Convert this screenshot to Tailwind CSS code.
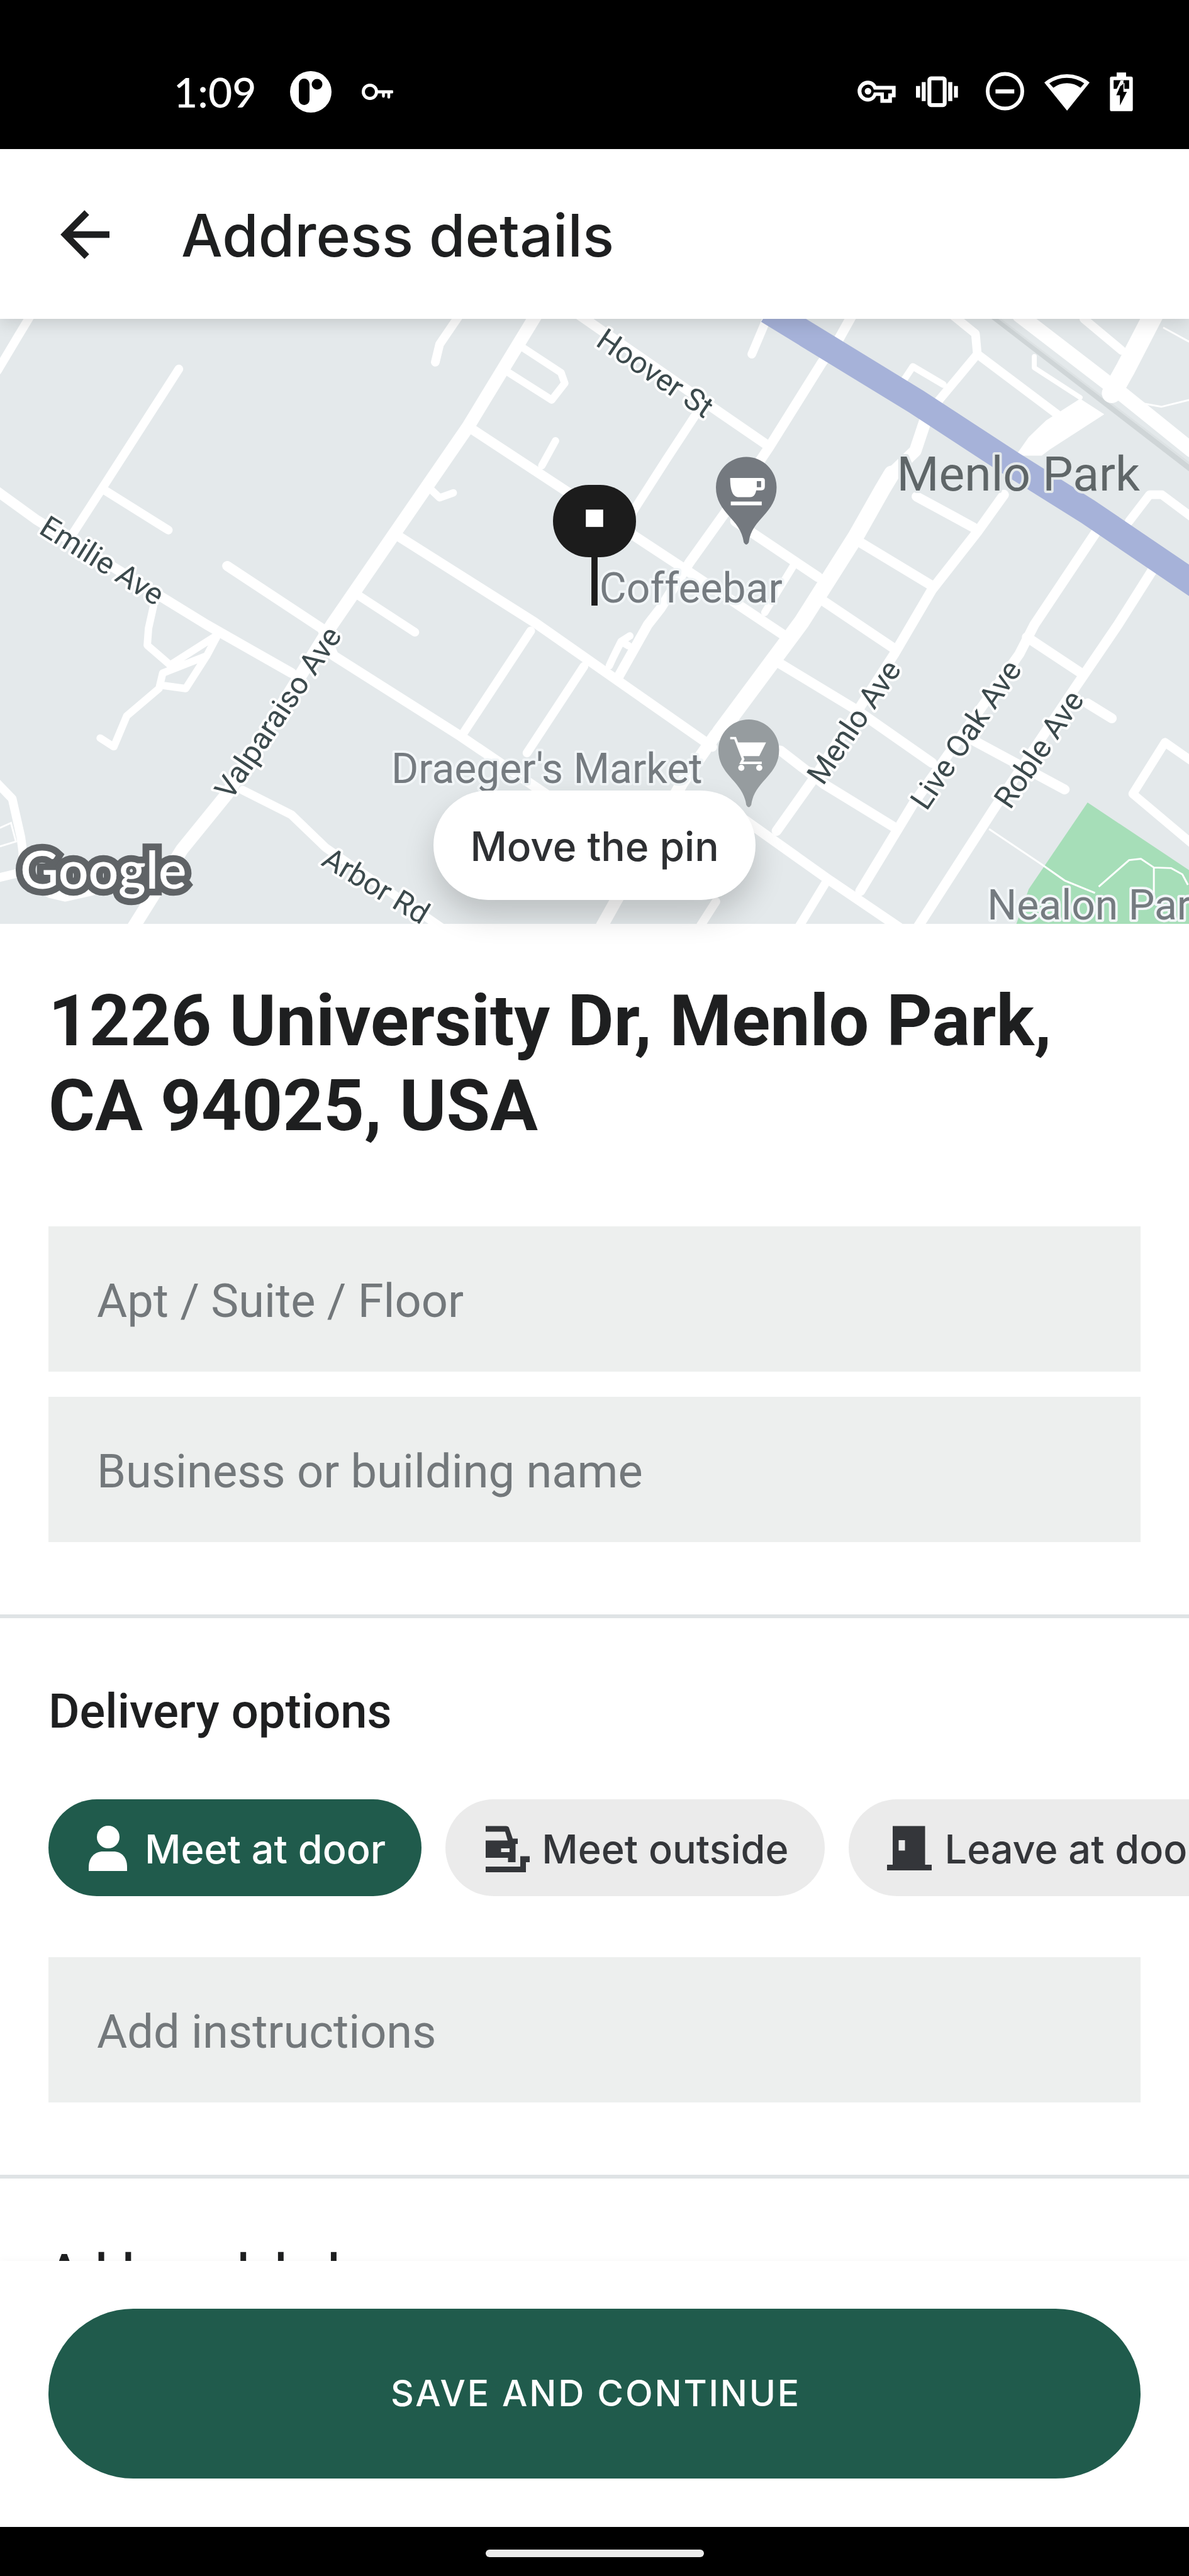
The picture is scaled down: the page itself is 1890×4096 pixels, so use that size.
<!DOCTYPE html>
<html lang="en">
<head>
<meta charset="utf-8">
<meta name="viewport" content="width=device-width, initial-scale=1">
<title>Address details</title>
<script src="https://cdn.jsdelivr.net/npm/@tailwindcss/browser@4"></script>
</head>
<body class="bg-white">
<div class="flex h-screen flex-col overflow-hidden bg-white font-['Roboto',sans-serif] text-[#1e1f20]">

  <!-- System status bar -->
  <div class="flex h-[237px] shrink-0 items-center justify-between bg-black pt-[54px] pr-[89px] pl-[276px] text-white">
    <div class="flex items-center">
      <span class="font-['Lato',sans-serif] text-[66px] leading-[80px] font-medium">1:09</span>
      <svg class="ml-[54px] h-[66px] w-[66px]" viewBox="0 0 66 66"><circle cx="33" cy="33" r="33" fill="#fff"/><rect x="14" y="12" width="17" height="42" rx="8.500" fill="#000"/><circle cx="43" cy="21" r="8.500" fill="#000"/></svg>
      <svg class="ml-[48px] h-[26px] w-[50px]" viewBox="0 0 50 26" fill="none" stroke="#fff" stroke-linecap="round"><circle cx="13" cy="13" r="10.500" stroke-width="5"/><path d="M24 13H48" stroke-width="5"/><path d="M34.500 14v6M43 14v7.500" stroke-width="4.500"/></svg>
    </div>
    <div class="flex items-center gap-[32px]">
      <svg class="h-[66px] w-[61px]" viewBox="70 72 186 200"><path fill="#fff" fill-rule="evenodd" d="M121 118c20 0 34 12 40 25h94v56h-18v26h-56v-33h-20c-6 15-20 27-40 27a50 50 0 1 1 0-101zM121 137a32 32 0 1 0 0 64c14 0 24-8 28-26h49v32h21v-27h18v-19h-88c-4-14-14-24-28-24z"/><circle cx="121" cy="169" r="16" fill="#fff"/></svg>
      <svg class="mr-[12px] h-[66px] w-[67px]" viewBox="357 72 204 200"><rect x="422" y="107" width="74" height="129" rx="8" fill="none" stroke="#fff" stroke-width="19"/><path d="M357 144h20v56h-20zM385 125h19v92h-19zM513 125h20v92h-20zM541 144h19v56h-19z" fill="#fff"/></svg>
      <svg class="h-[66px] w-[61px]" viewBox="694 72 186 200"><circle cx="787" cy="169" r="84" fill="none" stroke="#fff" stroke-width="18"/><path d="M741 160h91v20h-91z" fill="#fff"/></svg>
      <svg class="h-[66px] w-[72px]" viewBox="981 72 219 200"><path fill="#fff" fill-rule="evenodd" d="M981 127a170 170 0 0 1 219 0L1091 263zM1005 131l20 21a108 108 0 0 1 131 0l18-21a146 146 0 0 0-169 0z"/></svg>
      <svg class="h-[66px] w-[37px]" viewBox="1290 72 114 200"><path fill="#fff" d="M1324 77h46v20h24q9 0 9 9v152q0 9-9 9h-94q-9 0-9-9V106q0-9 9-9h24z"/><path fill="#000" d="M1309 115h45l-32 74h18v50l34-67h-17v-57h28v42h-23v-30l-34 30h-19z"/><path d="M1354 117l-26 54h-10l26-56z" fill="#fff"/></svg>
    </div>
  </div>

  <!-- App bar -->
  <header class="relative z-10 flex h-[270px] shrink-0 items-center bg-white pt-[2px] pl-[96px] shadow-[0_4px_26px_rgba(0,0,0,0.16)]">
    <button type="button" aria-label="Back" class="h-[80px] w-[80px]">
      <svg class="h-[80px] w-[80px]" viewBox="0 0 80 80" fill="none" stroke="#1e1f20" stroke-width="10.500"><path d="M42 5 7.500 40 42 75M7 40H78"/></svg>
    </button>
    <h1 class="ml-[112px] pt-[2px] font-['Inter',sans-serif] text-[93px] leading-[112px] font-medium">Address details</h1>
  </header>

  <main class="flex min-h-0 flex-1 flex-col overflow-hidden">
    <!-- Map with the location pin -->
    <section class="relative shrink-0" aria-label="Map">
      <svg class="block h-[962px] w-full" viewBox="0 0 1920 977" preserveAspectRatio="xMidYMid slice" font-family="Roboto, sans-serif">
        <rect width="1920" height="977" fill="#e4e9eb"/>
        <path fill="#a6deb8" d="M1756 781 1930 897V980H1640L1661 921z"/>
        <g fill="none" stroke="#fff" stroke-width="3">
          <path d="M1597 824 1682 881 1719 907 1768 927M1774 917 1823 874 1842 872 1863 886 1891 887 1909 897 1918 914M1863 886v60M1817 117 1848 137 1875 142 1920 131M1878 14 1920 37M0 822l18-8 8 30-26 8"/>
        </g>
        <g fill="none" stroke="#cfd5d7"><path d="M1603 -4 1924 244" stroke-width="9"/><path d="M1609 -4 1924 236" stroke="#dde2e4" stroke-width="3"/></g>
        <g fill="none" stroke="#fff" stroke-linecap="round" stroke-linejoin="round">
          <g stroke-width="14">
            <path d="M50 -6 30 27-4 84M289 81 165 274 119 345M165 274 272 341M742 -6 710 41 703 70"/>
            <path d="M248 464 240 500 238 527 275 559 352 510 334 544 263 572 257 597 205 641 184 691 162 677M334 544 300 597 263 592" stroke-width="12"/>
            <path d="M845 47 906 87 912 104 891 131 817 84M897 197 875 237M690 270 710 289 732 281M1017 512 1003 521 990 547M1003 521 1015 528M990 547 984 560" stroke-width="12"/>
            <path d="M575 444 670 506M857 504 747 671M943 561 851 701M392 761 471 801 526 854 716 985"/>
            <path d="M-4 750 20 775 34 837 37 860 38 893 -4 903M80 928 105 934 150 924"/>
            <path d="M1122 157 1076 227 1010 330M1238 0 1214 57"/>
            <path d="M1474 77 1456 104M1474 77 1523 106" stroke-width="11"/>
            <path d="M1538 -6 1575 24 1578 57 1514 134M1578 57 1707 154M1750 0 1811 51"/>
            <path d="M1670 61v18l74 48" stroke-width="8"/>
            <path d="M1284 394 1235 474" stroke-width="12"/>
            <path d="M1823 327 1856 284 1876 284 1924 320M1881 684 1829 767 1924 847M1881 684 1924 714"/>
            <path d="M1333 911 1291 980M1156 941 1131 980"/>
          </g>
          <g stroke-width="16">
            <path d="M-5 278 60 325 334 494 471 572M756 174 1101 401 1266 511M637 347 863 490 1150 691M367 399 520 500 539 544 744 674 900 780"/>
            <path d="M930 -10 1162 151 1239 204M1376 -6 1352 37 1327 71 1242 207 1168 317 1113 394 1067 467 1046 494 997 581"/>
            <path d="M1187 327 1321 417M1480 287 1572 337M1389 361 1505 431M1327 454 1446 534"/>
            <path d="M1621 284 1578 344 1505 437 1444 541 1315 741 1254 827"/>
            <path d="M1768 347 1670 494 1646 541 1474 784 1389 924M1860 407 1805 494 1737 594 1603 794 1480 985"/>
            <path d="M1658 514 1744 571M1756 621 1795 645M1260 557 1382 631 1505 717M1572 681 1719 760M1260 697 1330 751 1444 821M1160 780 1205 811 1340 907 1455 985"/>
          </g>
          <path stroke-width="21" d="M868 -10 756 174 637 347 536 494 367 767 294 857 214 985"/>
          <path stroke-width="20" d="M1494 165 1478 213 1440 250M1156 671 1101 750 972 980"/>
          <path stroke-width="26" d="M1440 250 1425 275 1382 351 1294 490 1162 668"/>
          <path stroke-width="24" d="M1646 -6 1811 121 1924 212"/>
          <path stroke-width="32" d="M1862 -6 1817 81 1795 120"/>
        </g>
        <path fill="#fff" d="M1744 129 1783 154 1695 211 1682 221H1640L1661 191 1689 164z"/>
        <path fill="none" stroke="#a6b2d9" stroke-width="42" d="M1240 -13 1480 134 1633 234 1756 311 1940 436"/>

        <!-- Place markers -->
        <path fill="#74797f" d="M1201 361C1196 322 1156 314 1156 272a49 49 0 0 1 98 0C1254 314 1214 322 1209 361q-4 7-8 0z"/>
        <path fill="#fff" fill-rule="evenodd" d="M1179 257h52q4 0 4 4v10q0 6-6 6h-8c-1 6-4 11-10 11h-18c-10 0-14-12-14-31zM1222 262v10h7v-10z"/><path fill="#fff" d="M1180 295h50v6h-50z"/>
        <path fill="#969c9f" d="M1205 785C1200 746 1160 738 1160 696a49 49 0 0 1 98 0C1258 738 1218 746 1213 785q-4 7-8 0z"/>
        <path fill="none" stroke="#fff" stroke-width="4" d="M1179 677h8l13 34-3 6h33"/><path fill="#fff" d="M1189 684h48l-11 22h-28z"/><circle cx="1197" cy="725" r="5" fill="#fff"/><circle cx="1226" cy="725" r="5" fill="#fff"/>

        <!-- Street names -->
        <g font-size="49" fill="#3c4a4d" stroke="#fff" stroke-width="8" stroke-linejoin="round" paint-order="stroke">
          <text transform="translate(61 345) rotate(32)">Emilie Ave</text>
          <text transform="translate(960 42) rotate(34)">Hoover St</text>
          <text transform="translate(373 779) rotate(-56)">Valparaiso Ave</text>
          <text transform="translate(517 881) rotate(31)">Arbor Rd</text>
          <text transform="translate(1329 755) rotate(-56)">Menlo Ave</text>
          <text transform="translate(1496 796) rotate(-56)">Live Oak Ave</text>
          <text transform="translate(1631 794) rotate(-56)">Roble Ave</text>
        </g>
        <!-- Place names -->
        <g font-size="67" fill="#757b80" stroke="#f2f6f8" stroke-width="8" stroke-linejoin="round" paint-order="stroke">
          <text x="968" y="458">Coffeebar</text>
          <text x="632" y="750">Draeger's Market</text>
          <text x="1594" y="970">Nealon Park</text>
          <text x="1448" y="277" font-size="78" fill="#5f6668" stroke="#e4e9eb">Menlo Park</text>
        </g>
        <text x="33" y="920" font-family="Lato, sans-serif" font-size="85" font-weight="600" fill="#fff" stroke="#5f6366" stroke-width="22" paint-order="stroke">Google</text>

        <!-- Selected location -->
        <rect x="893" y="268" width="134" height="117" rx="58" fill="#1c1c1c"/>
        <path fill="#1c1c1c" d="M955 380h10v83h-10z"/><path fill="#fff" d="M946 308h28v28h-28z"/>
      </svg>
      <div class="absolute inset-x-0 bottom-[38px] flex justify-center">
        <button type="button" class="h-[174px] rounded-full bg-white px-[58px] pt-[4px] font-['Inter',sans-serif] text-[64px] leading-[76px] font-medium text-[#2e3033] shadow-[0_24px_48px_rgba(0,0,0,0.18)]">Move the pin</button>
      </div>
    </section>

    <!-- Address -->
    <section class="shrink-0 border-b-[6px] border-[#dfe3e5] px-[77px] pt-[87px] pb-[115px]">
      <h2 class="text-[113px] leading-[135px] font-bold">1226 University Dr, Menlo Park,<br>CA 94025, USA</h2>
      <div class="mt-[124px] flex flex-col gap-[40px]">
        <input type="text" aria-label="Apartment, suite or floor" placeholder="Apt / Suite / Floor" class="h-[231px] w-full bg-[#edefee] px-[77px] pt-[6px] text-[74px] placeholder:text-[#73787b]">
        <input type="text" aria-label="Business or building name" placeholder="Business or building name" class="h-[231px] w-full bg-[#edefee] px-[77px] pt-[6px] text-[74px] placeholder:text-[#73787b]">
      </div>
    </section>

    <!-- Delivery options -->
    <section class="shrink-0 border-b-[6px] border-[#dfe3e5] pt-[103px] pb-[115px]">
      <h3 class="px-[77px] text-[76px] leading-[90px] font-medium">Delivery options</h3>
      <div class="mt-[95px] flex gap-[38px] overflow-hidden pl-[77px] font-['Inter',sans-serif] text-[63px] leading-[76px] font-medium whitespace-nowrap text-[#34363a]">
        <button type="button" aria-pressed="true" class="flex h-[154px] shrink-0 items-center gap-[19px] rounded-full bg-[#205b4c] px-[57px] text-white">
          <svg class="h-[77px] w-[77px]" viewBox="0 0 77 77" fill="currentColor"><circle cx="38" cy="21" r="18"/><path d="M7 75V69C7 54 16 44 30 44H46C60 44 68 54 68 69V75z"/></svg>
          <span class="pt-[4px]">Meet at door</span>
        </button>
        <button type="button" aria-pressed="false" class="flex h-[154px] shrink-0 items-center gap-[19px] rounded-full bg-[#ebebeb] px-[57px]">
          <svg class="h-[77px] w-[77px]" viewBox="0 0 77 77" fill="currentColor"><path fill-rule="evenodd" d="M7 3.500H39Q43 3.500 44 6L50 23.500H58V32H54.500V61H42.500V54H7V26.500H42L38 12.500H7zM31.500 39V45H45V39z"/><path d="M7 68H62V51.500H77V61H71V77H7z"/></svg>
          <span class="pt-[4px]">Meet outside</span>
        </button>
        <button type="button" aria-pressed="false" class="flex h-[154px] shrink-0 items-center gap-[19px] rounded-full bg-[#ebebeb] px-[57px]">
          <svg class="h-[77px] w-[77px]" viewBox="0 0 77 77" fill="currentColor"><path fill-rule="evenodd" d="M13 3.500H64.500V65H75V74H4V65H13zM22.500 26V42.500H32.500V26z"/></svg>
          <span class="pt-[4px]">Leave at door</span>
        </button>
      </div>
      <div class="mt-[97px] px-[77px]">
        <input type="text" aria-label="Delivery instructions" placeholder="Add instructions" class="block h-[231px] w-full bg-[#edefee] px-[77px] pt-[6px] text-[74px] placeholder:text-[#73787b]">
      </div>
    </section>

    <section class="shrink-0 px-[77px] pt-[103px]">
      <h3 class="text-[76px] leading-[90px] font-medium">Address label</h3>
    </section>
  </main>

  <!-- Primary action -->
  <footer class="relative z-10 shrink-0 bg-white px-[77px] pt-[76px] pb-[77px] shadow-[0_0_12px_rgba(0,0,0,0.04)]">
    <button type="button" class="h-[270px] w-full rounded-full bg-[#205b4c] pl-[4px] font-['Inter',sans-serif] text-[57px] leading-[70px] font-medium tracking-wider text-white">SAVE AND CONTINUE</button>
  </footer>
  <div class="flex h-[78px] shrink-0 justify-center bg-black pt-[36px]">
    <div class="h-[12px] w-[347px] rounded-full bg-[#ebebeb]"></div>
  </div>
</div>
</body>
</html>
